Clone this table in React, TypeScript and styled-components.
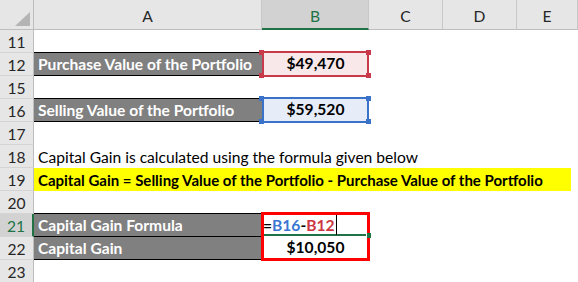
import styled, { createGlobalStyle, css } from 'styled-components';

const GlobalStyle = createGlobalStyle`
  html, body {
    margin: 0;
    padding: 0;
    background: #ffffff;
    overflow: hidden;
  }
`;

const GREEN = '#217346';

const tones = {
  red: { line: '#c8394a', fill: '#f9e8e9' },
  blue: { line: '#3a72c9', fill: '#e7edf8' },
};

type Tone = keyof typeof tones;

const Sheet = styled.div`
  display: grid;
  grid-template-columns: 34px 228px 107px 74px 74px 1fr;
  grid-template-rows: 30px repeat(11, 23px);
  width: 578px;
  height: 282px;
  overflow: hidden;
  font-family: Lato, 'Liberation Sans', sans-serif;
  font-size: 15.6px;
  color: #000;
`;

const Corner = styled.div`
  box-sizing: border-box;
  background: #e6e6e6;
  border-right: 1px solid #bdbdbd;
  border-bottom: 1px solid #bdbdbd;
  display: flex;
  align-items: flex-end;
  justify-content: flex-end;
  padding: 0 3px 3px 0;
`;

const ColHead = styled.div<{ $active?: boolean }>`
  box-sizing: border-box;
  background: #e6e6e6;
  border-right: 1px solid #c8c8c8;
  border-bottom: 1px solid #bdbdbd;
  color: #262626;
  display: flex;
  align-items: center;
  justify-content: center;
  padding-top: 3px;
  ${(p) =>
    p.$active &&
    css`
      background: #d2d2d2;
      color: ${GREEN};
      border-bottom: 2px solid ${GREEN};
    `}
`;

const RowHead = styled.div<{ $row: number; $active?: boolean }>`
  grid-row: ${(p) => p.$row};
  grid-column: 1;
  box-sizing: border-box;
  background: #e6e6e6;
  border-right: 1px solid #bdbdbd;
  border-bottom: 1px solid #d4d4d4;
  color: #262626;
  display: flex;
  align-items: center;
  justify-content: center;
  padding-top: 1px;
  ${(p) =>
    p.$active &&
    css`
      background: #d2d2d2;
      color: ${GREEN};
      border-right: 2px solid ${GREEN};
    `}
`;

const Cell = styled.div<{ $row: number; $col: number; $span?: number }>`
  grid-row: ${(p) => p.$row};
  grid-column: ${(p) => `${p.$col} / span ${p.$span ?? 1}`};
  box-sizing: border-box;
  padding: 2px 4px 0;
  line-height: 21px;
  white-space: nowrap;
`;

const Band = styled(Cell)`
  align-self: start;
  height: 24px;
  margin-top: -1px;
  background: #808080;
  border-top: 1px solid #000;
  border-bottom: 1px solid #000;
  color: #fff;
  font-weight: 700;
  padding-top: 1px;
`;

const Note = styled(Cell)`
  font-weight: 700;
  font-size: 15px;
  justify-self: start;
  width: 537px;
  background: #ffff00;
`;

const RefCell = styled(Cell)<{ $tone: Tone }>`
  position: relative;
  align-self: start;
  height: 24px;
  margin-top: -1px;
  padding-top: 1px;
  text-align: center;
  font-weight: 700;
  background: ${(p) => tones[p.$tone].fill};
`;

const RefFrame = styled.div<{ $tone: Tone }>`
  position: absolute;
  top: -1px;
  bottom: -1px;
  left: 0;
  right: 0;
  border: 2px solid ${(p) => tones[p.$tone].line};
  pointer-events: none;
`;

const Handle = styled.span<{ $tone: Tone; $top?: boolean; $left?: boolean }>`
  position: absolute;
  width: 5px;
  height: 5px;
  background: ${(p) => tones[p.$tone].line};
  ${(p) => (p.$top ? 'top: -3px;' : 'bottom: -3px;')}
  ${(p) => (p.$left ? 'left: -5px;' : 'right: -4px;')}
`;

const Editing = styled.div<{ $row: number; $col: number }>`
  grid-row: ${(p) => `${p.$row} / span 2`};
  grid-column: ${(p) => p.$col};
  position: relative;
  display: grid;
  grid-template-rows: 22px 23px;
  font-weight: 700;
  z-index: 1;
`;

const FormulaLine = styled.div`
  border-bottom: 2px solid ${GREEN};
  padding-left: 1px;
  line-height: 22px;
  white-space: nowrap;
`;

const ValueLine = styled.div`
  text-align: center;
  line-height: 23px;
`;

const Ref = styled.span<{ $tone: Tone }>`
  color: ${(p) => (p.$tone === 'blue' ? '#3b76d3' : '#cc3743')};
`;

const Caret = styled.span`
  display: inline-block;
  width: 1px;
  height: 21px;
  margin-left: 1px;
  background: #000;
  vertical-align: top;
`;

const RedBox = styled.div`
  position: absolute;
  top: -2px;
  left: -1px;
  right: -1px;
  bottom: -1px;
  border: 3px solid #ff0000;
  pointer-events: none;
`;

const FillHandle = styled.span`
  position: absolute;
  right: -2px;
  top: 19px;
  width: 4px;
  height: 5px;
  background: ${GREEN};
  border-left: 1px solid #fff;
`;

const columns = ['A', 'B', 'C', 'D', 'E'];
const rowNumbers = [11, 12, 15, 16, 17, 18, 19, 20, 21, 22, 23];

const RefBox = ({ row, tone, value }: { row: number; tone: Tone; value: string }) => (
  <RefCell $row={row} $col={3} $tone={tone}>
    {value}
    <RefFrame $tone={tone}>
      <Handle $tone={tone} $top $left />
      <Handle $tone={tone} $top />
      <Handle $tone={tone} $left />
      <Handle $tone={tone} />
    </RefFrame>
  </RefCell>
);

export default function App() {
  return (
    <>
      <GlobalStyle />
      <Sheet>
        <Corner>
          <svg width="15" height="14" viewBox="0 0 15 14">
            <polygon points="15,0 15,14 0,14" fill="#b4b4b4" />
          </svg>
        </Corner>
        {columns.map((c) => (
          <ColHead key={c} $active={c === 'B'}>
            {c}
          </ColHead>
        ))}

        {rowNumbers.map((n, i) => (
          <RowHead key={n} $row={i + 2} $active={n === 21}>
            {n}
          </RowHead>
        ))}

        <Band $row={3} $col={2}>Purchase Value of the Portfolio</Band>
        <RefBox row={3} tone="red" value="$49,470" />

        <Band $row={5} $col={2}>Selling Value of the Portfolio</Band>
        <RefBox row={5} tone="blue" value="$59,520" />

        <Cell $row={7} $col={2} $span={5}>
          Capital Gain is calculated using the formula given below
        </Cell>
        <Note $row={8} $col={2} $span={5}>
          Capital Gain = Selling Value of the Portfolio - Purchase Value of the Portfolio
        </Note>

        <Band $row={10} $col={2}>Capital Gain Formula</Band>
        <Band $row={11} $col={2}>Capital Gain</Band>
        <Editing $row={10} $col={3}>
          <FormulaLine>
            =<Ref $tone="blue">B16</Ref>-<Ref $tone="red">B12</Ref>
            <Caret />
          </FormulaLine>
          <ValueLine>$10,050</ValueLine>
          <RedBox />
          <FillHandle />
        </Editing>
      </Sheet>
    </>
  );
}
